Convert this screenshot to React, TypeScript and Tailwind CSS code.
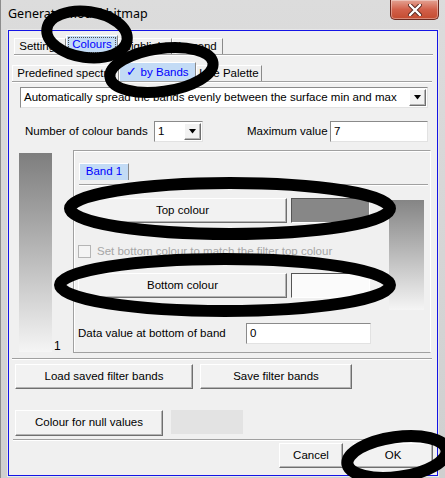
import React from "react";

const raised =
  "bg-[#f2f2f2] border border-t-white border-l-white border-r-[#6f6f6f] border-b-[#6f6f6f] shadow-[inset_-1px_-1px_0_#b4b4b4]";
const sunken =
  "border border-t-[#8a8a8a] border-l-[#8a8a8a] border-r-[#e2e2e2] border-b-[#e2e2e2] bg-white";

function Btn({ w, h, children }: { w: string; h: string; children: React.ReactNode }) {
  return (
    <div className={`${raised} ${w} ${h} flex items-center justify-center`}>{children}</div>
  );
}

function Groove({ w, ml }: { w: string; ml: string }) {
  return <div className={`${w} ${ml} h-[2px] border-t border-t-[#a0a0a0] border-b border-b-white`} />;
}

function Arrow() {
  return (
    <div className={`${raised} w-[17px] h-[17px] flex items-center justify-center`}>
      <svg width="9" height="5" viewBox="0 0 9 5">
        <polygon points="1,0 8,0 4.5,4.5" fill="#000" />
      </svg>
    </div>
  );
}

function Tab({
  label,
  w,
  selected,
  focus,
}: {
  label: React.ReactNode;
  w: string;
  selected?: boolean;
  focus?: boolean;
}) {
  if (selected) {
    return (
      <div
        className={`${w} h-[19px] bg-[#c3dbf5] border border-t-white border-l-white border-r-[#8a8a8a] border-b-0 flex items-center justify-center text-[#0000ff] p-[1px]`}
      >
        <div
          className={`w-full h-full flex items-center justify-center ${
            focus ? "border border-dotted border-[#505050]" : ""
          }`}
        >
          {label}
        </div>
      </div>
    );
  }
  return (
    <div
      className={`${w} h-[16px] border border-t-white border-l-white border-r-[#8a8a8a] border-b-0 flex items-center justify-center`}
    >
      {label}
    </div>
  );
}

export default function App() {
  return (
    <div className="relative w-[445px] h-[478px] overflow-hidden bg-linear-to-b from-[#dcdcdc] to-[#cfcfcf] border-l border-l-[#8c8c8c] font-['Liberation_Sans',Arial,sans-serif] text-[11.5px] text-black leading-none">
      {/* title bar */}
      <div className="h-[30px] flex items-start">
        <div className="pl-[7px] pt-[8px] text-[12.5px] font-['Noto_Sans',sans-serif] text-black">
          Generate Model bitmap
        </div>
        <div className="ml-auto mr-[6px] w-[49px] h-[20px] rounded-b-[5px] border border-t-0 border-[#6e2a20] bg-linear-to-b from-[#e3a293] via-[#d2604a] to-[#c44b2f] flex items-center justify-center shadow-[inset_0_0_0_1px_rgba(255,255,255,0.35)]">
          <svg width="14" height="12" viewBox="0 0 14 12">
            <path d="M2 1 L12 11 M12 1 L2 11" stroke="#5a2a22" strokeWidth="4.2" strokeLinecap="round" />
            <path d="M2 1 L12 11 M12 1 L2 11" stroke="#ffffff" strokeWidth="2.4" strokeLinecap="round" />
          </svg>
        </div>
      </div>

      {/* client area */}
      <div className="ml-[7px] w-[430px] h-[446px] border border-[#1414e6] bg-[#f0f0f0] flex flex-col shadow-[0_0_0_1px_#e8e8e8]">
        {/* tab row 1 */}
        <div className="ml-[5px] mt-[5px] h-[18px] flex items-end">
          <Tab label="Settings" w="w-[52px]" />
          <Tab label="Colours" w="w-[52px]" selected focus />
          <Tab label="Highlight" w="w-[54px]" />
          <Tab label="Legend" w="w-[51px]" />
        </div>
        <Groove w="w-[419px]" ml="ml-[5px]" />

        {/* tab row 2 */}
        <div className="ml-[3px] mt-[6px] h-[19px] flex items-end">
          <Tab label="Predefined spectra" w="w-[107px]" />
          <Tab
            label={
              <span>
                <span className="text-[13px]">✓</span> by Bands
              </span>
            }
            w="w-[77px]"
            selected
          />
          <Tab label="Use Palette" w="w-[66px]" />
        </div>
        <Groove w="w-[420px]" ml="ml-[3px]" />

        {/* dropdown */}
        <div className={`ml-[11px] mt-[4px] w-[408px] h-[21px] ${sunken} flex items-center`}>
          <div className="flex-1 pl-[3px]">
            Automatically spread the bands evenly between the surface min and max
          </div>
          <div className="mr-[1px]">
            <Arrow />
          </div>
        </div>

        {/* number row */}
        <div className="ml-[16px] mt-[13px] h-[21px] flex items-center">
          <div className="w-[129px]">Number of colour bands</div>
          <div className={`w-[49px] h-[21px] ${sunken} flex items-center`}>
            <div className="flex-1 pl-[3px]">1</div>
            <div className="mr-[1px]">
              <Arrow />
            </div>
          </div>
          <div className="ml-[44px] w-[83px]">Maximum value</div>
          <div className={`w-[98px] h-[21px] ${sunken} flex items-center pl-[3px]`}>7</div>
        </div>

        {/* main area */}
        <div className="mt-[8px] flex">
          <div className="ml-[10px] mt-[3px] w-[33px] h-[199px] bg-linear-to-b from-[#7e7e7e] to-[#f5f5f5]" />
          <div className="w-[21px] flex items-end pl-[2px] pb-[1px] text-[12px]">1</div>
          <div className="w-[358px] h-[203px] border border-t-[#a0a0a0] border-l-[#a0a0a0] border-r-white border-b-[#a0a0a0] shadow-[inset_1px_1px_0_white] flex flex-col">
            <div className="ml-[5px] mt-[12px] flex">
              <div className="w-[50px] h-[17px] bg-[#c3dbf5] border border-t-white border-l-white border-r-[#8a8a8a] border-b-0 flex items-center justify-center text-[#0000ff]">
                Band 1
              </div>
            </div>
            <div className="mt-[4px]">
              <Groove w="w-[349px]" ml="ml-[5px]" />
            </div>
            <div className="mt-[12px] ml-[4px] flex">
              <div className="w-[292px] flex flex-col">
                <div className="flex">
                  <Btn w="w-[209px]" h="h-[25px]">Top colour</Btn>
                  <div className="ml-[4px] w-[79px] h-[25px] border border-t-[#555] border-l-[#555] border-r-white border-b-white bg-[#878787]" />
                </div>
                <div className="mt-[22px] flex items-center h-[13px]">
                  <div className="w-[13px] h-[13px] border border-[#b5b5b5] bg-[#f4f4f4]" />
                  <div className="ml-[6px] text-[#a6a6a6] whitespace-nowrap">Set bottom colour to match the filter top colour</div>
                </div>
                <div className="mt-[15px] flex">
                  <Btn w="w-[209px]" h="h-[25px]">Bottom colour</Btn>
                  <div className="ml-[4px] w-[79px] h-[25px] border border-t-[#555] border-l-[#555] border-r-white border-b-white bg-[#fbfbfb]" />
                </div>
              </div>
              <div className="ml-[19px] mt-[2px] w-[35px] h-[110px] bg-linear-to-b from-[#858585] to-[#f5f5f5]" />
            </div>
            <div className="mt-[13px] ml-[4px] flex items-center h-[21px]">
              <div className="w-[168px]">Data value at bottom of band</div>
              <div className={`w-[125px] h-[21px] ${sunken} flex items-center pl-[3px]`}>0</div>
            </div>
          </div>
        </div>

        <div className="mt-[5px]">
          <Groove w="w-[420px]" ml="ml-[3px]" />
        </div>

        {/* filter bands buttons */}
        <div className="ml-[6px] mt-[4px] flex">
          <Btn w="w-[178px]" h="h-[25px]">Load saved filter bands</Btn>
          <div className="ml-[7px]">
            <Btn w="w-[152px]" h="h-[25px]">Save filter bands</Btn>
          </div>
        </div>

        <div className="ml-[6px] mt-[21px] flex items-start">
          <Btn w="w-[148px]" h="h-[26px]">Colour for null values</Btn>
          <div className="ml-[8px] w-[72px] h-[24px] bg-[#e3e3e3]" />
        </div>

        <div className="mt-[3px]">
          <Groove w="w-[420px]" ml="ml-[4px]" />
        </div>

        <div className="ml-[270px] mt-[2px] flex">
          <Btn w="w-[64px]" h="h-[25px]">Cancel</Btn>
          <div className="ml-[10px]">
            <Btn w="w-[80px]" h="h-[25px]">OK</Btn>
          </div>
        </div>
      </div>

      {/* annotation ellipses */}
      <svg
        className="absolute inset-0 pointer-events-none"
        width="445"
        height="478"
        viewBox="0 0 445 478"
      >
        <g fill="none" stroke="#000">
          <ellipse cx="86" cy="34.5" rx="40.5" ry="23" strokeWidth="11" transform="rotate(8 86 34.5)" />
          <ellipse cx="160.5" cy="70" rx="52" ry="21.5" strokeWidth="11" transform="rotate(-8 160.5 70)" />
          <ellipse cx="229" cy="208.5" rx="160" ry="25.5" strokeWidth="12" />
          <ellipse cx="224" cy="285" rx="165" ry="26" strokeWidth="12" />
          <ellipse cx="396" cy="457" rx="50" ry="20" strokeWidth="12" transform="rotate(-8 396 457)" />
        </g>
      </svg>
    </div>
  );
}
